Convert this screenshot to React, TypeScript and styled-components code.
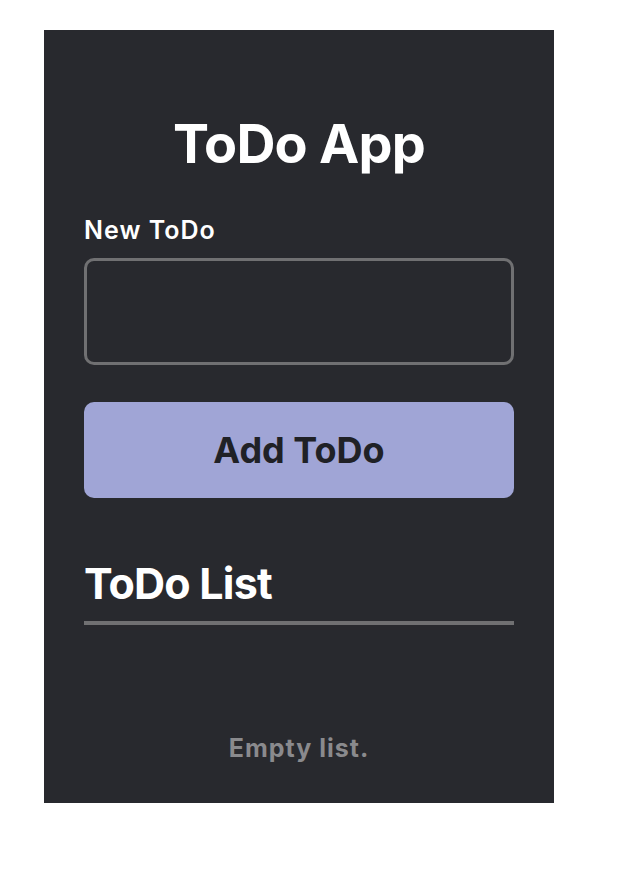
import React, { useState } from "react";
import styled, { createGlobalStyle } from "styled-components";

const Global = createGlobalStyle`
  html, body { margin: 0; padding: 0; background: #ffffff; }
  body { font-family: Inter, "Noto Sans", sans-serif; }
  * { box-sizing: border-box; }
`;

const Page = styled.div`
  padding: 30px 0 0 44px;
`;

const Panel = styled.main`
  width: 510px;
  height: 773px;
  background: #28292e;
  padding: 0 40px;
  display: flex;
  flex-direction: column;
  color: #ffffff;
`;

const Title = styled.h1`
  margin: 0;
  padding-top: 80px;
  text-align: center;
  font-size: 54px;
  line-height: 68px;
  font-weight: 700;
  letter-spacing: -0.8px;
`;

const Form = styled.form`
  display: flex;
  flex-direction: column;
  margin-top: 37px;
`;

const Label = styled.label`
  font-size: 25px;
  font-weight: 600;
  line-height: 30px;
  letter-spacing: 1px;
`;

const Input = styled.input`
  margin-top: 13px;
  height: 107px;
  width: 100%;
  background: #28292e;
  border: 3px solid #707072;
  border-radius: 10px;
  color: #fff;
  font-size: 24px;
  padding: 0 16px;
  outline: none;
`;

const AddButton = styled.button`
  margin-top: 37px;
  height: 96px;
  width: 100%;
  border: none;
  border-radius: 10px;
  background: #a0a5d6;
  color: #202126;
  font-family: Inter, "Noto Sans", sans-serif;
  font-size: 36px;
  font-weight: 700;
  cursor: pointer;
`;

const ListTitle = styled.h2`
  margin: 58px 0 0;
  font-size: 43px;
  line-height: 54px;
  font-weight: 700;
  letter-spacing: -0.8px;
  padding-bottom: 11px;
  border-bottom: 4px solid #707072;
`;

const Empty = styled.p`
  margin: 0;
  padding-top: 108px;
  text-align: center;
  font-size: 25px;
  font-weight: 700;
  letter-spacing: 1px;
  color: #8a8a8d;
`;

export default function App() {
  const [value, setValue] = useState("");
  return (
    <>
      <Global />
      <Page>
        <Panel>
          <Title>ToDo App</Title>
          <Form onSubmit={(e) => e.preventDefault()}>
            <Label htmlFor="todo">New ToDo</Label>
            <Input id="todo" value={value} onChange={(e) => setValue(e.target.value)} />
            <AddButton type="submit">Add ToDo</AddButton>
          </Form>
          <ListTitle>ToDo List</ListTitle>
          <Empty>Empty list.</Empty>
        </Panel>
      </Page>
    </>
  );
}
